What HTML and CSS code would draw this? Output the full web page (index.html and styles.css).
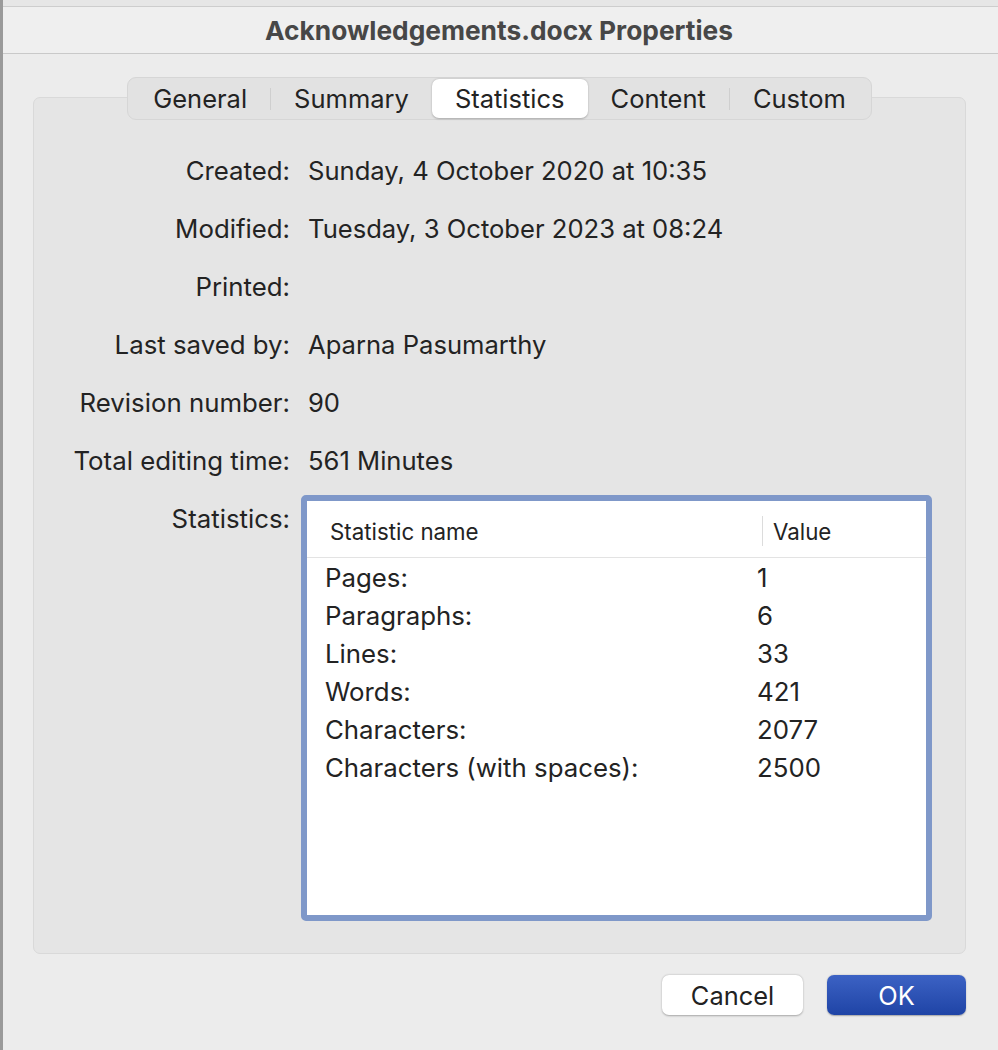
FILE: index.html
```
<!DOCTYPE html>
<html>
<head>
<meta charset="utf-8">
<link rel="stylesheet" href="styles.css">
</head>
<body>
<div class="window">
  <div class="topstrip"></div>
  <div class="titlebar"><span class="title">Acknowledgements.docx Properties</span></div>
  <div class="content">
    <div class="tabs-row">
      <div class="tabs">
        <div class="tab">General</div>
        <div class="sep"></div>
        <div class="tab">Summary</div>
        <div class="tab selected">Statistics</div>
        <div class="tab">Content</div>
        <div class="sep"></div>
        <div class="tab">Custom</div>
      </div>
    </div>
    <div class="panel">
      <div class="grid">
        <div class="label">Created:</div><div class="value">Sunday, 4 October 2020 at 10:35</div>
        <div class="label">Modified:</div><div class="value">Tuesday, 3 October 2023 at 08:24</div>
        <div class="label">Printed:</div><div class="value"></div>
        <div class="label">Last saved by:</div><div class="value">Aparna Pasumarthy</div>
        <div class="label">Revision number:</div><div class="value">90</div>
        <div class="label">Total editing time:</div><div class="value">561 Minutes</div>
        <div class="label">Statistics:</div>
        <div class="tablecell">
          <div class="table">
            <div class="thead">
              <div class="th name">Statistic name</div>
              <div class="th val"><span class="colsep"></span>Value</div>
            </div>
            <div class="tbody">
              <div class="tr"><div class="td name">Pages:</div><div class="td val">1</div></div>
              <div class="tr"><div class="td name">Paragraphs:</div><div class="td val">6</div></div>
              <div class="tr"><div class="td name">Lines:</div><div class="td val">33</div></div>
              <div class="tr"><div class="td name">Words:</div><div class="td val">421</div></div>
              <div class="tr"><div class="td name">Characters:</div><div class="td val">2077</div></div>
              <div class="tr"><div class="td name">Characters (with spaces):</div><div class="td val">2500</div></div>
            </div>
          </div>
        </div>
      </div>
    </div>
    <div class="buttons">
      <button class="btn cancel">Cancel</button>
      <button class="btn ok">OK</button>
    </div>
  </div>
</div>
</body>
</html>
```
FILE: styles.css
```
* { box-sizing: border-box; }
html, body { margin: 0; padding: 0; }
body {
  background: #ececec;
  font-family: Inter, "Liberation Sans", sans-serif;
  color: #232323;
}
.window {
  border-left: 3px solid #9a9a9a;
  min-height: 1050px;
  background: #ececec;
}
.topstrip {
  height: 7px;
  background: #e6e6e6;
  border-bottom: 1px solid #cdcdcd;
}
.titlebar {
  height: 47px;
  background: #efefef;
  border-bottom: 1px solid #c9c9c9;
  display: flex;
  align-items: center;
  justify-content: center;
  padding-right: 3px;
}
.title {
  font-weight: 700;
  font-size: 26.3px;
  color: #474747;
}
.content {
  padding: 0 32px 0 30px;
}
.tabs-row {
  display: flex;
  justify-content: center;
  margin-top: 23px;
  position: relative;
  z-index: 1;
}
.tabs {
  display: flex;
  align-items: center;
  height: 43px;
  padding: 0 2px;
  background: #e2e2e2;
  border: 1px solid #d6d6d6;
  border-radius: 9px;
}
.tab {
  height: 39px;
  display: flex;
  align-items: center;
  padding: 0 23px;
  font-size: 25.5px;
  color: #232323;
}
.tab.selected {
  background: #ffffff;
  border-radius: 7px;
  box-shadow: 0 0.5px 2px rgba(0,0,0,0.25);
}
.sep {
  width: 1px;
  height: 22px;
  background: #cfcfcf;
}
.panel {
  margin-top: -23px;
  height: 857px;
  background: #e5e5e5;
  border: 1px solid #d9d9d9;
  border-radius: 7px;
  padding-top: 44px;
}
.grid {
  display: grid;
  grid-template-columns: 256px 1fr;
  column-gap: 11px;
  align-items: start;
}
.label {
  text-align: right;
  font-size: 25.8px;
  line-height: 58px;
}
.value {
  font-size: 25.6px;
  line-height: 58px;
  padding-left: 7px;
  min-height: 58px;
}
.tablecell {
  padding-top: 5px;
}
.table {
  width: 631px;
  height: 426px;
  border: 6px solid #7f98c9;
  border-radius: 5px;
  background: #ffffff;
}
.thead {
  display: flex;
  height: 57px;
  padding-top: 4px;
  border-bottom: 1px solid #e3e3e3;
  align-items: center;
}
.th {
  font-size: 22.3px;
  color: #232323;
}
.th.name {
  width: 455px;
  padding-left: 23px;
}
.th.val {
  display: flex;
  align-items: center;
}
.colsep {
  width: 1px;
  height: 30px;
  background: #dcdcdc;
  margin-right: 10px;
}
.tr {
  display: flex;
  height: 38px;
  align-items: center;
}
.td {
  font-size: 25.8px;
}
.td.name {
  width: 450px;
  padding-left: 18px;
}
.buttons {
  display: flex;
  justify-content: flex-end;
  gap: 24px;
  margin-top: 21px;
}
.btn {
  font-family: Inter, "Liberation Sans", sans-serif;
  font-size: 25.4px;
  height: 40px;
  border-radius: 7px;
  border: none;
  padding: 0;
}
.cancel {
  width: 141px;
  background: #ffffff;
  color: #222;
  box-shadow: 0 0.5px 2px rgba(0,0,0,0.3);
}
.ok {
  width: 139px;
  background: linear-gradient(#3c62c4, #1f44a6);
  color: #ffffff;
  box-shadow: 0 0.5px 1.5px rgba(0,0,0,0.3);
}
```
